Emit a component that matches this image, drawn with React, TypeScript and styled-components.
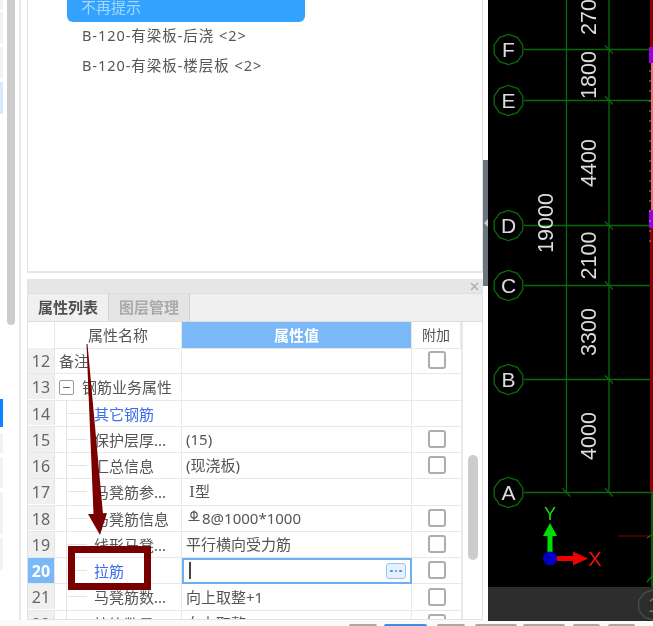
import React from 'react'
import styled, { createGlobalStyle } from 'styled-components'

const GlobalStyle = createGlobalStyle`
    html, body {
        margin: 0;
        padding: 0;
        background: #fff;
    }
    * {
        box-sizing: border-box;
    }
`

const Page = styled.div`
    width: 653px;
    height: 626px;
    overflow: hidden;
    position: relative;
    background: #fff;
    font-family: "Noto Sans", "Noto Sans CJK SC", sans-serif;
    color: #555;
    filter: blur(0.3px);
`

const Main = styled.div`
    display: flex;
    height: 620px;
`

const Rail = styled.div`
    width: 27px;
    flex: none;
    display: flex;
    gap: 4px;
    border-right: 6px solid #fff;
`

const RailCards = styled.div`
    width: 3px;
    flex: none;
    display: flex;
    flex-direction: column;
`

const RailCard = styled.div<{ $h: number; $gap: number; $color?: string }>`
    height: ${p => p.$h}px;
    margin-bottom: ${p => p.$gap}px;
    background: ${p => p.$color || '#f2f2f2'};
`

const RailBar = styled.div`
    width: 10px;
    height: 325px;
    background: #ccc;
    border-radius: 0 0 5px 5px;
`

const RailLine = styled.div`
    width: 2px;
    margin-left: 0;
    background: #e8e8e8;
`

const Panels = styled.div`
    width: 456px;
    flex: none;
    display: flex;
    flex-direction: column;
    gap: 6px;
`

const UpperPanel = styled.div`
    height: 273px;
    flex: none;
    border-left: 1px solid #e2e2e2;
    border-right: 1px solid #e2e2e2;
    border-bottom: 2px solid #e6e6e6;
    padding-left: 39px;
`

const Hint = styled.div`
    width: 238px;
    height: 22px;
    background: #33a3ff;
    border-radius: 0 0 6px 6px;
    color: #a6d8ff;
    font-size: 15px;
    line-height: 14px;
    padding-left: 14px;
    overflow: hidden;
`

const PickList = styled.ul`
    list-style: none;
    margin: 0;
    padding: 0 0 0 15px;
`

const PickItem = styled.li`
    height: 30px;
    line-height: 27px;
    font-size: 14.5px;
    letter-spacing: 0.95px;
    color: #555;
    white-space: pre;
`

const LowerPanel = styled.div`
    flex: 1;
    min-height: 0;
    display: flex;
    flex-direction: column;
    overflow: hidden;
    border-left: 1px solid #e2e2e2;
    border-right: 1px solid #e2e2e2;
    border-bottom: 1px solid #e2e2e2;
`

const TitleBar = styled.div`
    height: 14px;
    flex: none;
    background: #e6e6e6;
    display: flex;
    justify-content: flex-end;
    align-items: center;
    padding-right: 3px;
`

const TabRow = styled.div`
    height: 29px;
    flex: none;
    display: flex;
    background: #f0f0f0;
    border-top: 1px solid #ddd;
    border-bottom: 1px solid #ddd;
`

const Tab = styled.div<{ $active?: boolean }>`
    width: 81px;
    text-align: center;
    font-size: 15px;
    font-weight: 700;
    line-height: 27px;
    color: ${p => (p.$active ? '#505050' : '#aaa')};
    background: ${p => (p.$active ? '#f0f0f0' : '#e4e4e4')};
    border-right: 1px solid #d0d0d0;
`

const TableWrap = styled.div`
    flex: 1;
    min-height: 0;
    display: flex;
`

const Table = styled.div`
    width: 435px;
    flex: none;
    border-right: 2px solid #e8e8e8;
`

const HeadRow = styled.div`
    display: grid;
    grid-template-columns: 27px 127px 230px 1fr;
    height: 26px;
`

const HeadCell = styled.div<{ $accent?: boolean; $small?: boolean }>`
    text-align: center;
    line-height: 26px;
    font-size: ${p => (p.$small ? 14 : 15)}px;
    font-weight: ${p => (p.$accent ? 700 : 400)};
    color: ${p => (p.$accent ? '#fff' : '#555')};
    background: ${p => (p.$accent ? '#7ab8f8' : '#fff')};
    border-right: 1px solid #e8e8e8;
    border-bottom: 1px solid #e8e8e8;
`

const Row = styled.div`
    display: grid;
    grid-template-columns: 27px 127px 230px 1fr;
    grid-template-rows: 24.75px;
    height: 26.25px;
    border-bottom: 1.5px solid #e8e8e8;
`

const NumCell = styled.div<{ $active?: boolean }>`
    text-align: center;
    font-size: 16px;
    line-height: 27px;
    font-weight: ${p => (p.$active ? 700 : 400)};
    color: ${p => (p.$active ? '#fff' : '#666')};
    background: ${p => (p.$active ? '#7ab8f8' : '#f0f0f0')};
    border-right: 1.5px solid #e4e4e4;
`

const NameCell = styled.div<{ $indent: number; $blue?: boolean; $branch?: boolean }>`
    position: relative;
    padding-left: ${p => p.$indent}px;
    font-size: 15px;
    line-height: 27px;
    white-space: nowrap;
    color: ${p => (p.$blue ? '#3b6cf0' : '#555')};
    border-right: 1.5px solid #e8e8e8;

    ${p =>
        p.$branch &&
        `
        &::before {
            content: "";
            position: absolute;
            left: 11px;
            top: 0;
            bottom: -2px;
            width: 1px;
            background: #e4e4e4;
        }
        &::after {
            content: "";
            position: absolute;
            left: 12px;
            top: 12px;
            width: 20px;
            height: 1px;
            background: #e4e4e4;
        }
    `}
`

const Fold = styled.span`
    position: absolute;
    left: 4px;
    top: 6px;
    width: 15px;
    height: 15px;
    border: 1.5px solid #999;
    border-radius: 2px;
    background: #fff;
    display: flex;
    align-items: center;
    justify-content: center;

    &::after {
        content: "";
        width: 7px;
        height: 1px;
        background: #666;
    }
`

const ValueCell = styled.div`
    padding: 1px 0 0 4px;
    font-size: 15px;
    line-height: 25px;
    white-space: nowrap;
    color: #555;
    display: flex;
    align-items: center;
    gap: 2px;
    border-right: 1.5px solid #e8e8e8;
`

const WideNumeral = styled.span`
    font-family: "DejaVu Serif", "Noto Sans CJK SC", serif;
    margin-left: 3px;
`

const MarkSlot = styled.span`
    display: flex;
    margin: 0 0 4px 2px;
`

const EditCell = styled.div`
    display: flex;
    align-items: center;
    justify-content: space-between;
    padding: 0 4px 0 5px;
    border: 2px solid #6eaef5;
    margin-bottom: -1px;
    background: #fff;
`

const Caret = styled.span`
    width: 1.5px;
    height: 17px;
    background: #444;
`

const MoreButton = styled.span`
    width: 20px;
    height: 16px;
    display: flex;
    align-items: center;
    justify-content: center;
    gap: 2px;
    background: #e6f1fd;
    border: 1px solid #97c7f8;
    border-radius: 3px;
`

const Dot = styled.i`
    width: 2.5px;
    height: 2.5px;
    border-radius: 50%;
    background: #3b8df0;
`

const CheckCell = styled.div`
    display: flex;
    align-items: center;
    justify-content: center;
`

const Check = styled.span`
    width: 18px;
    height: 18px;
    border: 2px solid #adadad;
    border-radius: 3px;
    background: #fff;
`

const Gutter = styled.div`
    flex: 1;
    padding: 133px 0 0 5px;
`

const Thumb = styled.div`
    width: 10px;
    height: 105px;
    border-radius: 5px;
    background: #ccc;
`

const Splitter = styled.div`
    width: 5px;
    flex: none;
    padding-top: 160px;
    background: #fff;
`

const Handle = styled.div`
    height: 126px;
    background: #6c7480;
    display: flex;
    align-items: center;
    justify-content: center;
`

const HandleArrow = styled.i`
    width: 0;
    height: 0;
    border-top: 4px solid transparent;
    border-bottom: 4px solid transparent;
    border-right: 4px solid #c8ccd2;
`

const Canvas = styled.div`
    flex: 1;
    height: 621px;
    background: #000;
`

const CanvasSvg = styled.svg`
    display: block;
`

const BottomBar = styled.div`
    height: 6px;
    display: flex;
    align-items: flex-end;
    padding-left: 349px;
    background: #fafafa;
`

const BarButton = styled.div<{ $w: number; $gap: number; $blue?: boolean }>`
    width: ${p => p.$w}px;
    height: 2px;
    flex: none;
    margin-right: ${p => p.$gap}px;
    border-radius: 3px 3px 0 0;
    background: ${p => (p.$blue ? '#3a8ee6' : '#a8a8a8')};
`

const Callout = styled.svg`
    position: absolute;
    left: 0;
    top: 0;
    pointer-events: none;
`

const RedBox = styled.div`
    position: absolute;
    left: 68px;
    top: 546px;
    width: 83px;
    height: 44px;
    border: 7px solid #7a0000;
`

type RowData = {
    no: number
    name: string
    indent: number
    blue?: boolean
    branch?: boolean
    fold?: boolean
    value?: React.ReactNode
    check?: boolean
    active?: boolean
}

const RebarMark = () => (
    <MarkSlot>
        <svg width="12" height="12" viewBox="0 0 12 12">
            <circle cx="6" cy="5" r="3.2" fill="none" stroke="#555" strokeWidth="1.2" />
            <path d="M6 0.5V10.5M0.5 10.5H11.5" fill="none" stroke="#555" strokeWidth="1.2" />
        </svg>
    </MarkSlot>
)

const rows: RowData[] = [
    { no: 12, name: '备注', indent: 4, check: true },
    { no: 13, name: '钢筋业务属性', indent: 27, fold: true },
    { no: 14, name: '其它钢筋', indent: 39, blue: true, branch: true },
    { no: 15, name: '保护层厚...', indent: 39, branch: true, value: '(15)', check: true },
    { no: 16, name: '汇总信息', indent: 39, branch: true, value: '(现浇板)', check: true },
    { no: 17, name: '马凳筋参...', indent: 39, branch: true, value: <WideNumeral>Ⅰ型</WideNumeral> },
    {
        no: 18,
        name: '马凳筋信息',
        indent: 39,
        branch: true,
        value: (
            <>
                <RebarMark />
                8@1000*1000
            </>
        ),
        check: true,
    },
    { no: 19, name: '线形马凳...', indent: 39, branch: true, value: '平行横向受力筋', check: true },
    { no: 20, name: '拉筋', indent: 39, blue: true, branch: true, check: true, active: true },
    { no: 21, name: '马凳筋数...', indent: 39, branch: true, value: '向上取整+1', check: true },
    { no: 22, name: '拉筋数量', indent: 39, branch: true, value: '向上取整+1', check: true },
]

const railCards = [
    { h: 10, gap: 2 },
    { h: 31, gap: 4 },
    { h: 31, gap: 4 },
    { h: 32, gap: 285, color: '#d6e9ff' },
    { h: 28, gap: 6, color: '#0a84ff' },
    { h: 20, gap: 4 },
    { h: 31, gap: 4 },
    { h: 42, gap: 4 },
    { h: 32, gap: 0 },
]

const barButtons = [
    { w: 28, gap: 7 },
    { w: 43, gap: 10, blue: true },
    { w: 28, gap: 10 },
    { w: 42, gap: 6 },
    { w: 42, gap: 8 },
    { w: 27, gap: 8 },
    { w: 27, gap: 0 },
]

// canvas coordinates: origin is at x 488 of the page
const GREEN = '#0a6a0a'
const axes = [
    { label: 'F', y: 49.5 },
    { label: 'E', y: 100.5 },
    { label: 'D', y: 225.5 },
    { label: 'C', y: 285.5 },
    { label: 'B', y: 379.5 },
    { label: 'A', y: 492.5 },
]

const spans = [
    { text: '2700', x: 100, y: 11 },
    { text: '1800', x: 100, y: 75 },
    { text: '4400', x: 100, y: 163 },
    { text: '2100', x: 100, y: 255.5 },
    { text: '3300', x: 100, y: 332 },
    { text: '4000', x: 100, y: 436 },
    { text: '19000', x: 57, y: 223 },
]

function decagon(cx: number, cy: number, r: number) {
    const pts: string[] = []
    for (let i = 0; i < 10; i++) {
        const a = (Math.PI / 5) * i + Math.PI / 10
        pts.push(`${(cx + r * Math.cos(a)).toFixed(1)},${(cy + r * Math.sin(a)).toFixed(1)}`)
    }
    return pts.join(' ')
}

const tickYs = Array.from({ length: 18 }, (_, i) => 71 + i * 10)

function Drawing() {
    return (
        <CanvasSvg width="165" height="621" viewBox="0 0 165 621" fontFamily="'Liberation Sans', sans-serif">
            <path d="M78.5 0V492.5M121 0V492.5" stroke={GREEN} strokeWidth="1.3" fill="none" />
            {axes.map(a => (
                <g key={a.label}>
                    <path d={`M36 ${a.y}H165`} stroke={GREEN} strokeWidth="1.3" />
                    <path d={`M117 ${a.y - 4}L125 ${a.y + 4}`} stroke={GREEN} strokeWidth="1.2" />
                    <polygon points={decagon(20.5, a.y, 15)} fill="#000" stroke={GREEN} strokeWidth="1.3" />
                    <text x="20.5" y={a.y + 7.5} textAnchor="middle" fontSize="21" fill="#ddd">
                        {a.label}
                    </text>
                </g>
            ))}
            <path d="M74.5 488.5L82.5 496.5" stroke={GREEN} strokeWidth="1.2" />
            {spans.map(s => (
                <text
                    key={s.text}
                    transform={`translate(${s.x} ${s.y}) rotate(-90)`}
                    y="7.5"
                    textAnchor="middle"
                    fontSize="21.5"
                    fill="#ddd"
                >
                    {s.text}
                </text>
            ))}

            {/* right edge */}
            <path d="M163.5 0V47M163.5 228V492" stroke="#8f0000" strokeWidth="3" />
            <path d="M164 50V226" stroke="#f07070" strokeWidth="2" />
            <rect x="161" y="47" width="4" height="16" fill="#a000e0" />
            <rect x="161" y="210" width="4" height="18" fill="#a000e0" />
            {tickYs.map(y => (
                <path key={y} d={`M161 ${y}H163`} stroke="#999" strokeWidth="1" />
            ))}
            <path d="M164 492V587" stroke="#0a7a0a" strokeWidth="1.5" />
            <path d="M130 536H165" stroke="#800000" strokeWidth="1.2" />
            <path d="M159 538L165 534M159 582L165 575" stroke="#0a7a0a" strokeWidth="1.2" />

            {/* ucs icon */}
            <text x="62" y="520" textAnchor="middle" fontSize="18" fill="#12e012">
                Y
            </text>
            <path d="M59.5 558V535H64.5V558Z" fill="#00e000" />
            <path d="M62 523L69 536H55Z" fill="#00e000" />
            <path d="M69 556H85V561H69Z" fill="#f00000" />
            <path d="M85 551.5L100 558.5L85 565.5Z" fill="#f00000" />
            <circle cx="62" cy="558.5" r="7" fill="#0000c0" />
            <text x="107" y="565.5" textAnchor="middle" fontSize="20" fill="#f01010">
                X
            </text>

            {/* status strip */}
            <rect x="0" y="587" width="165" height="34" fill="#2d2d2d" />
            <polygon points={decagon(165, 605, 15)} fill="none" stroke="#3f5a3f" strokeWidth="1.2" />
            <text x="160" y="612" fontSize="20" fill="#777">
                1
            </text>
        </CanvasSvg>
    )
}

export default function App() {
    return (
        <Page>
            <GlobalStyle />
            <Main>
                <Rail>
                    <RailCards>
                        {railCards.map((c, i) => (
                            <RailCard key={i} $h={c.h} $gap={c.gap} $color={c.color} />
                        ))}
                    </RailCards>
                    <RailBar />
                    <RailLine />
                </Rail>
                <Panels>
                    <UpperPanel>
                        <Hint>不再提示</Hint>
                        <PickList>
                            <PickItem>B-120-有梁板-后浇 {'<2>'}</PickItem>
                            <PickItem>B-120-有梁板-楼层板 {'<2>'}</PickItem>
                        </PickList>
                    </UpperPanel>
                    <LowerPanel>
                        <TitleBar>
                            <svg width="9" height="9" viewBox="0 0 9 9">
                                <path d="M1 1L8 8M8 1L1 8" stroke="#aaa" strokeWidth="1.3" />
                            </svg>
                        </TitleBar>
                        <TabRow>
                            <Tab $active>属性列表</Tab>
                            <Tab>图层管理</Tab>
                        </TabRow>
                        <TableWrap>
                            <Table>
                                <HeadRow>
                                    <HeadCell />
                                    <HeadCell>属性名称</HeadCell>
                                    <HeadCell $accent>属性值</HeadCell>
                                    <HeadCell $small>附加</HeadCell>
                                </HeadRow>
                                {rows.map(r => (
                                    <Row key={r.no}>
                                        <NumCell $active={r.active}>{r.no}</NumCell>
                                        <NameCell $indent={r.indent} $blue={r.blue} $branch={r.branch}>
                                            {r.fold && <Fold />}
                                            {r.name}
                                        </NameCell>
                                        {r.active ? (
                                            <EditCell>
                                                <Caret />
                                                <MoreButton>
                                                    <Dot />
                                                    <Dot />
                                                    <Dot />
                                                </MoreButton>
                                            </EditCell>
                                        ) : (
                                            <ValueCell>{r.value}</ValueCell>
                                        )}
                                        <CheckCell>{r.check && <Check />}</CheckCell>
                                    </Row>
                                ))}
                            </Table>
                            <Gutter>
                                <Thumb />
                            </Gutter>
                        </TableWrap>
                    </LowerPanel>
                </Panels>
                <Splitter>
                    <Handle>
                        <HandleArrow />
                    </Handle>
                </Splitter>
                <Canvas>
                    <Drawing />
                </Canvas>
            </Main>
            <BottomBar>
                {barButtons.map((b, i) => (
                    <BarButton key={i} $w={b.w} $gap={b.gap} $blue={b.blue} />
                ))}
            </BottomBar>
            <Callout width="653" height="626" viewBox="0 0 653 626">
                <path d="M86.5 344L87.5 344L103 514L107 513L100 535L88 514L93.5 514Z" fill="#7a0000" />
            </Callout>
            <RedBox />
        </Page>
    )
}
